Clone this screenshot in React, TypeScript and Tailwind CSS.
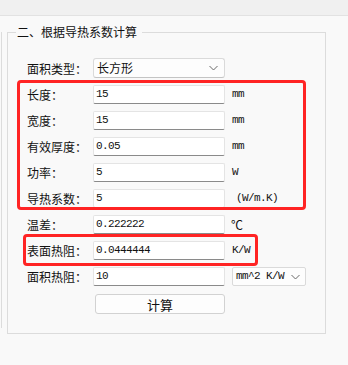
import React from "react";

const cjk = { fontFamily: '"Noto Sans CJK SC", "Noto Sans", sans-serif' };
const mono = { fontFamily: '"Liberation Mono", "Noto Sans CJK SC", monospace' };

function Chevron() {
  return (
    <svg width="9" height="6" viewBox="0 0 9 6" className="shrink-0">
      <polyline points="0.5,1 4.5,5 8.5,1" fill="none" stroke="#6b6b6b" strokeWidth="1" />
    </svg>
  );
}

function Label({ text }: { text: string }) {
  return (
    <div className="w-[66px] shrink-0 text-[12px] leading-[19px] text-[#111]" style={cjk}>
      {text}
    </div>
  );
}

function Input({ value }: { value: string }) {
  return (
    <div className="w-[132px] h-[19px] shrink-0 bg-white border border-[#e4e4e4] border-b-[#8a8a8a] rounded-[2px] flex items-center pl-[2px]">
      <span className="text-[11px] tracking-[-0.6px] text-[#111] leading-none" style={mono}>
        {value}
      </span>
    </div>
  );
}

function Unit({ text, pad = 0 }: { text: string; pad?: number }) {
  return (
    <div
      className={
        "ml-[7px] text-[11px] tracking-[-0.6px] text-[#111] leading-[19px] whitespace-pre " +
        (pad ? "pl-[4px]" : "")
      }
      style={mono}
    >
      {text}
    </div>
  );
}

function Row({ label, value, unit, pad }: { label: string; value: string; unit?: string; pad?: number }) {
  return (
    <div className="flex items-center h-[19px]">
      <Label text={label} />
      <Input value={value} />
      {unit && <Unit text={unit} pad={pad} />}
    </div>
  );
}

export default function App() {
  return (
    <div className="relative w-[348px] h-[365px] bg-[#f9f9f9] overflow-hidden" style={cjk}>
      <div className="h-[16px] bg-[#f0f0f0] border-b border-[#e2e2e2]" />
      <div className="flex items-start mt-[16px]">
        <div className="ml-px w-px h-[296px] bg-[#dcdcdc] shrink-0" />
        <div className="ml-[5px] w-[319px] border border-[#dcdcdc] pb-[19px]">
          <div
            className="-mt-[9px] ml-[8px] w-fit pl-px pr-[5px] bg-[#f9f9f9] text-[12px] leading-[16px] text-[#111]"
            style={cjk}
          >
            二、根据导热系数计算
          </div>
          <div className="pt-[18px] pl-[19px] flex flex-col gap-[7px]">
            <div className="flex items-center h-[20px]">
              <Label text="面积类型：" />
              <div className="w-[132px] h-[20px] bg-[#fdfdfd] border border-[#dadada] border-b-[#c4c4c4] rounded-[3px] flex items-center justify-between pl-[3px] pr-[6px]">
                <span className="text-[12px] leading-none text-[#111]" style={cjk}>
                  长方形
                </span>
                <Chevron />
              </div>
            </div>
            <Row label="长度：" value="15" unit="mm" />
            <Row label="宽度：" value="15" unit="mm" />
            <Row label="有效厚度：" value="0.05" unit="mm" />
            <Row label="功率：" value="5" unit="W" />
            <Row label="导热系数：" value="5" unit="(W/m.K)" pad={1} />
            <div className="flex items-center h-[19px]">
              <Label text="温差：" />
              <Input value="0.222222" />
              <div className="ml-[6px] text-[12px] leading-[19px] text-[#111]" style={cjk}>
                ℃
              </div>
            </div>
            <Row label="表面热阻：" value="0.0444444" unit="K/W" />
            <div className="flex items-center h-[19px]">
              <Label text="面积热阻：" />
              <Input value="10" />
              <div className="ml-[7px] w-[74px] h-[19px] bg-[#fdfdfd] border border-[#dadada] rounded-[2px] flex items-center justify-between pl-[3px] pr-[5px]">
                <span className="text-[11px] tracking-[-0.6px] leading-none text-[#111] whitespace-pre" style={mono}>
                  mm^2 K/W
                </span>
                <Chevron />
              </div>
            </div>
            <div className="flex mt-[1px]">
              <div className="w-[66px] shrink-0" />
              <button
                className="ml-[2px] w-[130px] h-[20px] bg-[#fdfdfd] border border-[#d2d2d2] rounded-[3px] text-[13px] leading-none text-[#111] flex items-center justify-center"
                style={cjk}
              >
                计算
              </button>
            </div>
          </div>
        </div>
      </div>
      <div className="absolute left-[17px] top-[80px] w-[289px] h-[130px] border-[3px] border-[#ff2424] rounded-[4px]" />
      <div className="absolute left-[23px] top-[234px] w-[235px] h-[32px] border-[3px] border-[#ff2424] rounded-[4px]" />
    </div>
  );
}
